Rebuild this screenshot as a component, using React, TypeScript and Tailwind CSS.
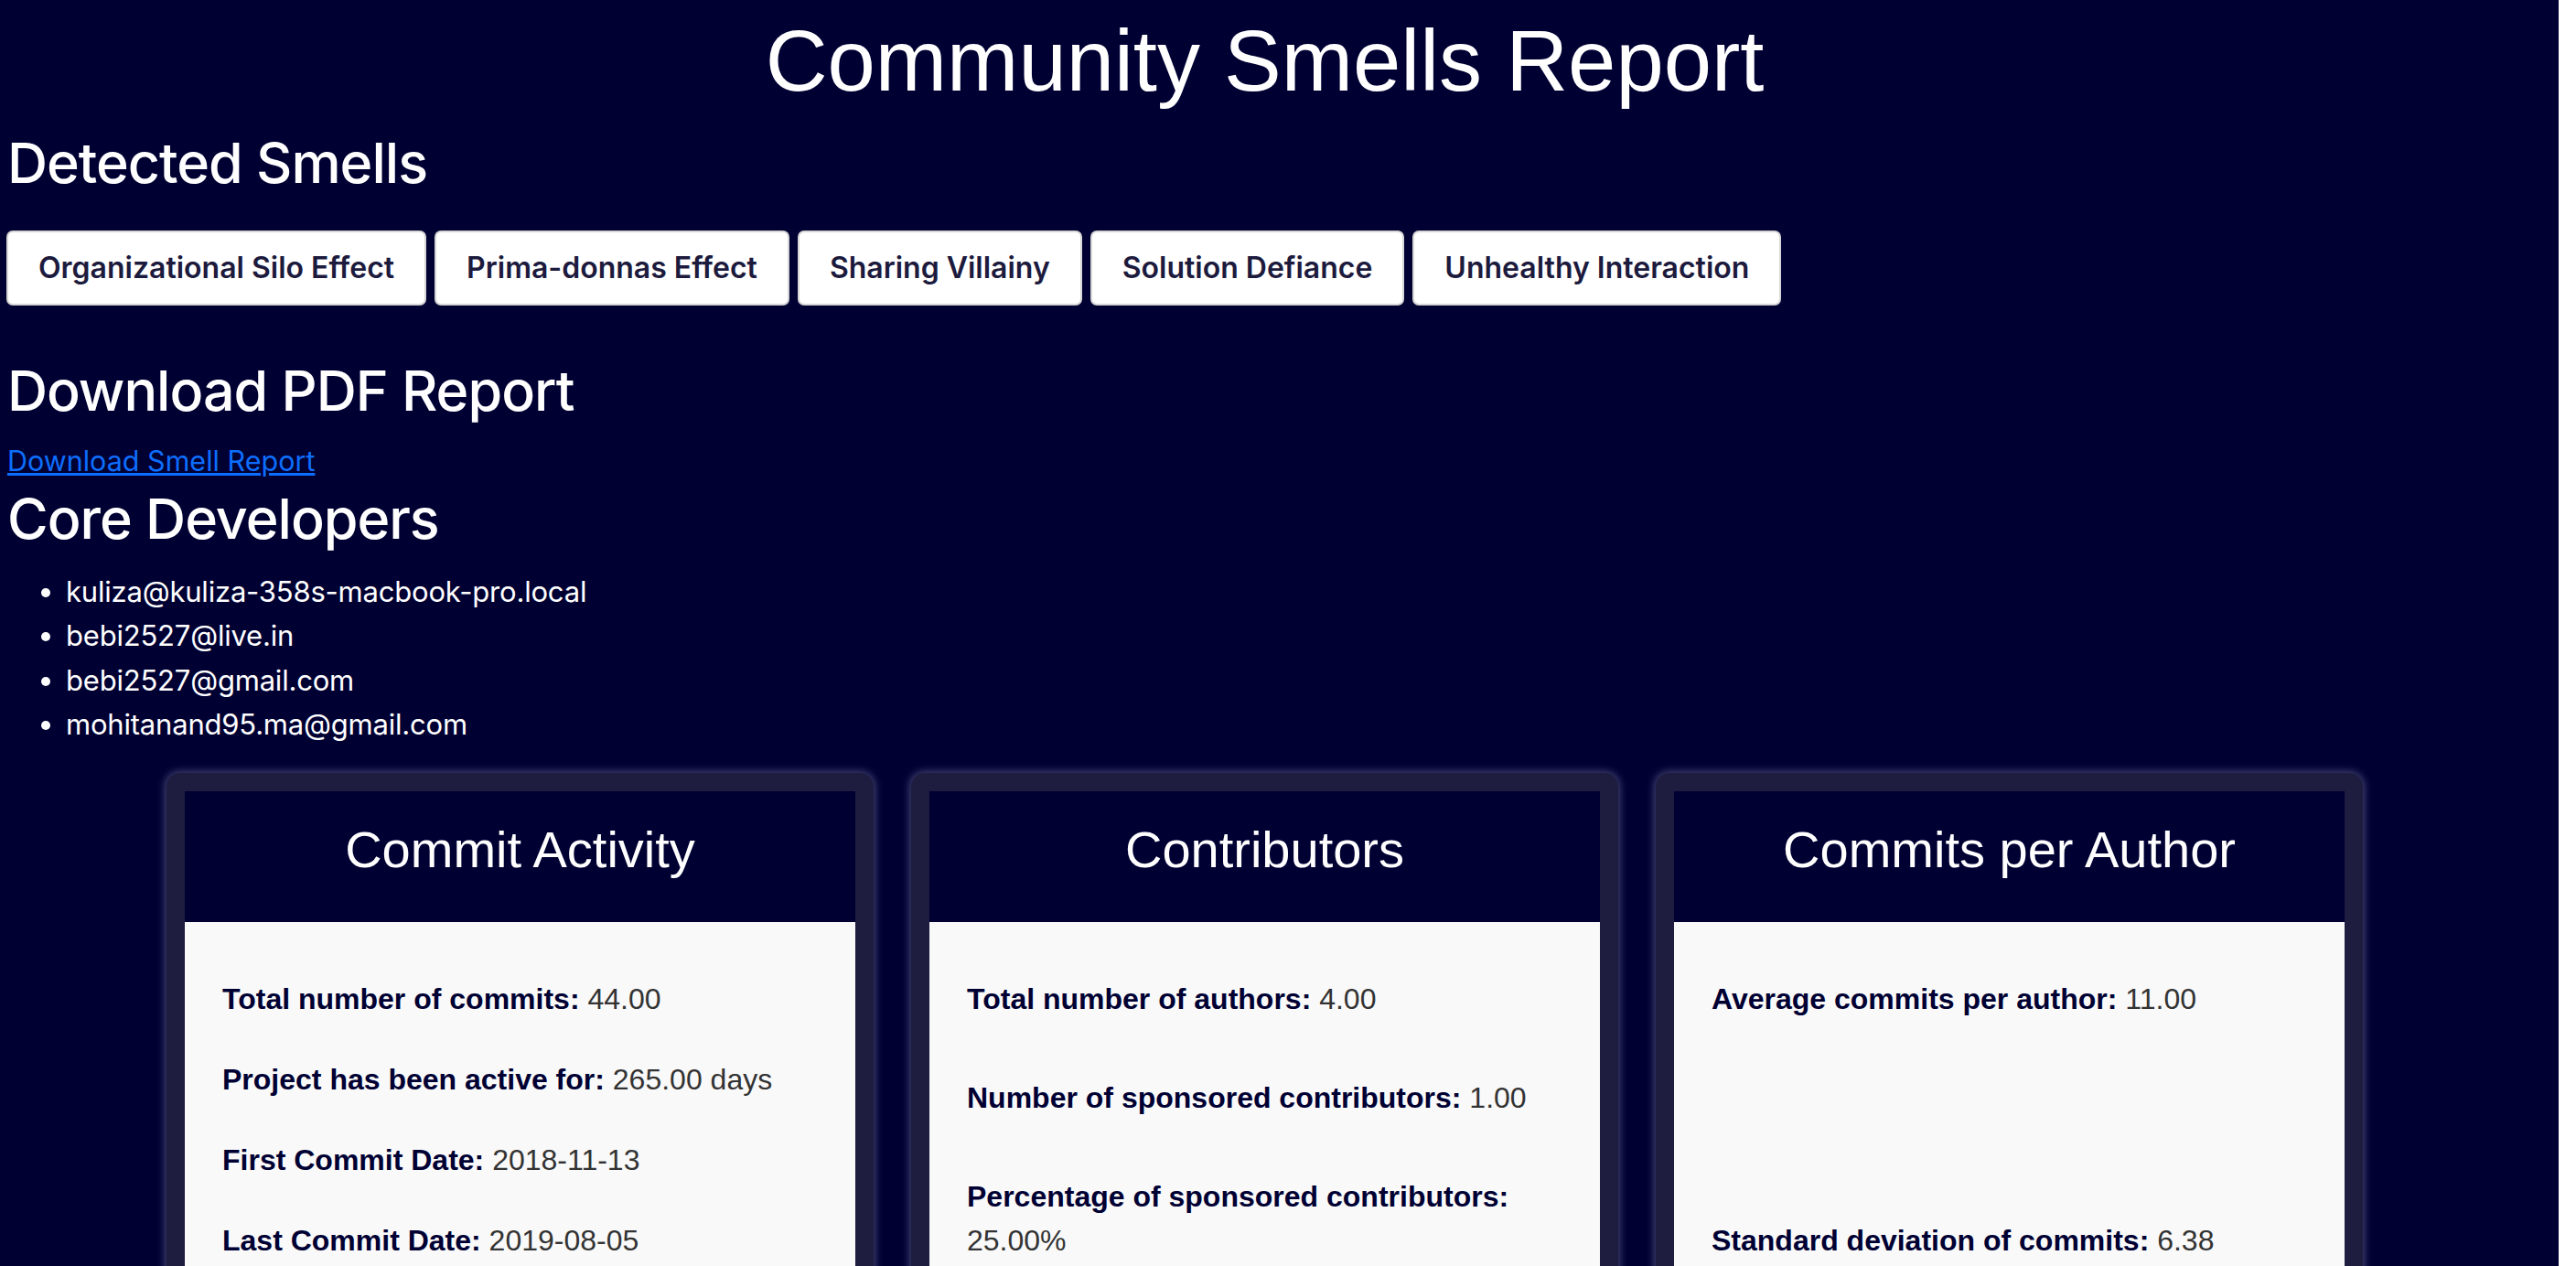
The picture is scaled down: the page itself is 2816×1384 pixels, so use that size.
const smells = [
  "Organizational Silo Effect",
  "Prima-donnas Effect",
  "Sharing Villainy",
  "Solution Defiance",
  "Unhealthy Interaction",
];

const developers = [
  "kuliza@kuliza-358s-macbook-pro.local",
  "bebi2527@live.in",
  "bebi2527@gmail.com",
  "mohitanand95.ma@gmail.com",
];

type Card = { title: string; gap: string; rows: [string, string][] };

const cards: Card[] = [
  {
    title: "Commit Activity",
    gap: "gap-[40px]",
    rows: [
      ["Total number of commits:", "44.00"],
      ["Project has been active for:", "265.00 days"],
      ["First Commit Date:", "2018-11-13"],
      ["Last Commit Date:", "2019-08-05"],
    ],
  },
  {
    title: "Contributors",
    gap: "gap-[60px]",
    rows: [
      ["Total number of authors:", "4.00"],
      ["Number of sponsored contributors:", "1.00"],
      ["Percentage of sponsored contributors:", "25.00%"],
    ],
  },
  {
    title: "Commits per Author",
    gap: "gap-[216px]",
    rows: [
      ["Average commits per author:", "11.00"],
      ["Standard deviation of commits:", "6.38"],
    ],
  },
];

function StatCard({ card }: { card: Card }) {
  return (
    <div className="w-[773px] shrink-0 rounded-[15px] bg-[#1e1c3f] p-[20px] shadow-[0_0_8px_2px_rgba(190,190,230,0.35)]">
      <div className="h-[143px] bg-[#000033] pt-[32px] text-center">
        <h3 className="text-[56px] leading-[64px] text-white [font-family:'Liberation_Sans',Arial,sans-serif]">
          {card.title}
        </h3>
      </div>
      <div
        className={`flex min-h-[700px] flex-col ${card.gap} bg-[#f9f9f9] px-[41px] pt-[60px] text-[32px] leading-[48px] [font-family:'Liberation_Sans',Arial,sans-serif]`}
      >
        {card.rows.map(([label, value]) => (
          <p key={label} className="text-[#333333]">
            <strong className="font-bold text-[#000033]">{label}</strong> {value}
          </p>
        ))}
      </div>
    </div>
  );
}

export default function App() {
  return (
    <div className="flex h-[1384px] overflow-hidden bg-white">
      <main className="w-[2797px] shrink-0 bg-[#000033] text-white [font-family:Inter,'Noto_Sans',sans-serif]">
        <div className="w-[2765px] pt-[13px] text-center">
          <h1 className="text-[94px] leading-[108px] font-normal [font-family:'Liberation_Sans',Arial,sans-serif]">
            Community Smells Report
          </h1>
        </div>

        <div className="pl-[8px]">
          <h2 className="mt-[21px] text-[61px] leading-[72px] font-medium tracking-[-1px]">
            Detected Smells
          </h2>

          <div className="mt-[38px] ml-[-1px] flex gap-[9px]">
            {smells.map((s) => (
              <button
                key={s}
                className="h-[82px] rounded-[7px] border-2 border-[#d6d6d6] bg-white px-[33px] text-[32px] leading-[40px] font-semibold text-[#1c1a3d]"
              >
                {s}
              </button>
            ))}
          </div>

          <h2 className="mt-[57px] text-[61px] leading-[72px] font-medium tracking-[-1px]">
            Download PDF Report
          </h2>
          <a
            href="#"
            className="mt-[17px] block w-fit text-[30.5px] leading-[48px] text-[#0d6efd] underline"
          >
            Download Smell Report
          </a>

          <h2 className="mt-[3px] text-[61px] leading-[72px] font-medium tracking-[-1px]">
            Core Developers
          </h2>
          <ul className="mt-[20px] list-disc pl-[64px] text-[31px] leading-[48.4px] tracking-[-0.2px]">
            {developers.map((d) => (
              <li key={d}>{d}</li>
            ))}
          </ul>
        </div>

        <div className="mt-[28px] flex w-[2765px] justify-center gap-[41px]">
          {cards.map((c) => (
            <StatCard key={c.title} card={c} />
          ))}
        </div>
      </main>
    </div>
  );
}
